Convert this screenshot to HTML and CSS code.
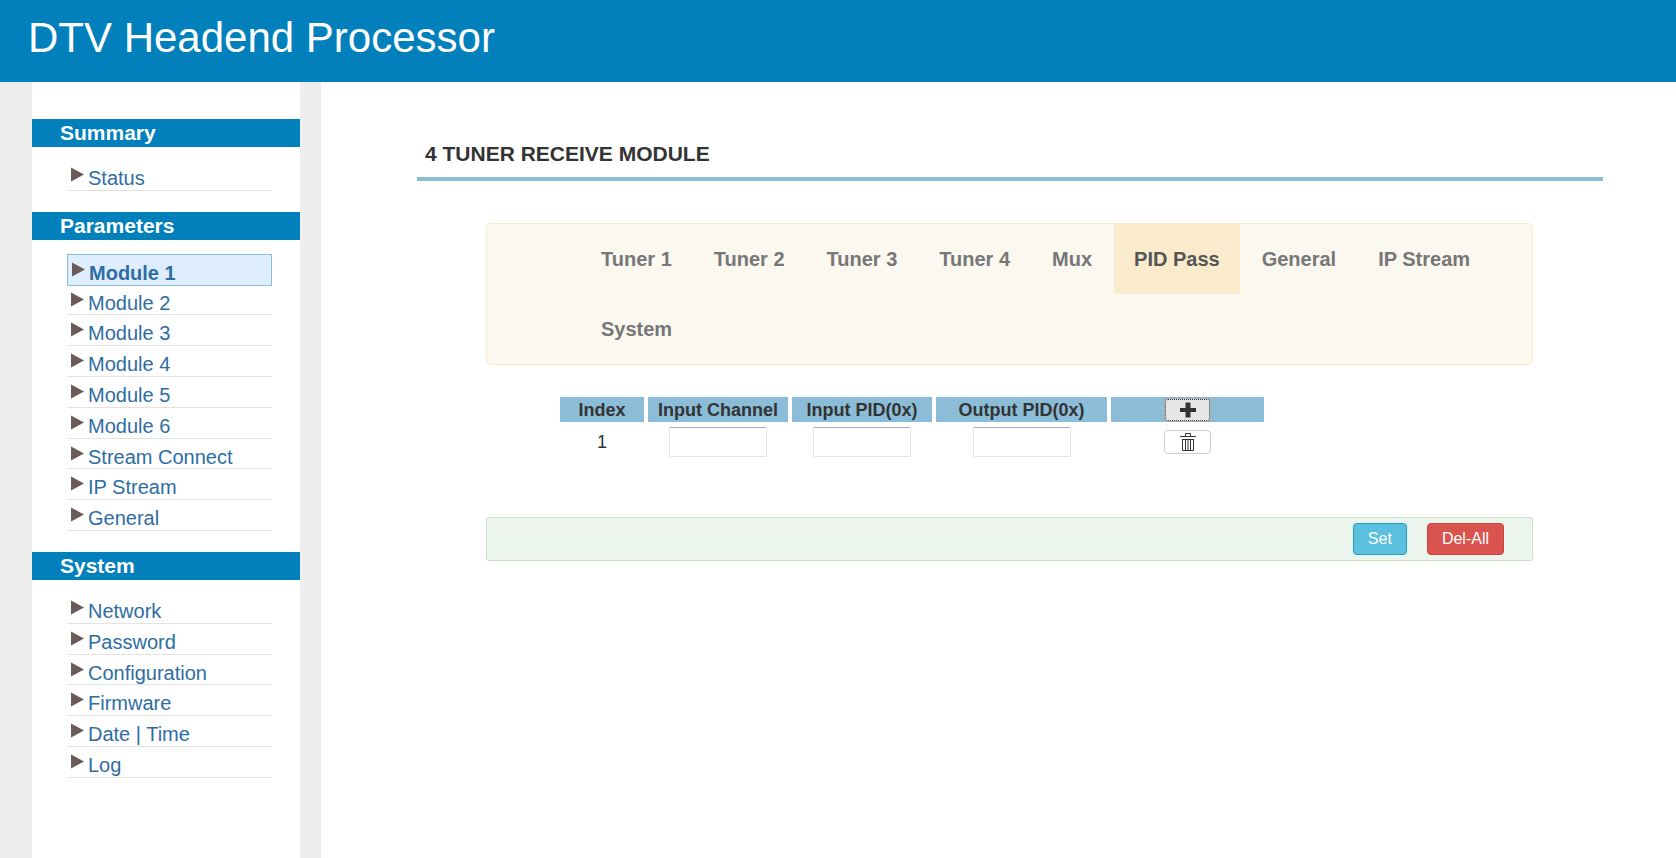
FILE: index.html
```html
<!DOCTYPE html>
<html lang="en">
<head>
    <meta charset="UTF-8">
    <title>DTV Headend Processor</title>
    <link rel="stylesheet" href="styles.css">
</head>
<body>
<svg class="sprite" aria-hidden="true">
    <symbol id="tri" viewBox="0 0 13 15"><path d="M0 0.5L13 7.5L0 14.5z" fill="#6b5a5a"/></symbol>
</svg>
<div class="header">
    <h1>DTV Headend Processor</h1>
</div>
<div class="wrap">
    <div class="side">
        <h2>Summary</h2>
        <ul>
            <li><a href="#"><svg><use href="#tri"/></svg>Status</a></li>
        </ul>
        <h2>Parameters</h2>
        <ul>
            <li class="current"><a href="#"><svg><use href="#tri"/></svg>Module 1</a></li>
            <li><a href="#"><svg><use href="#tri"/></svg>Module 2</a></li>
            <li><a href="#"><svg><use href="#tri"/></svg>Module 3</a></li>
            <li><a href="#"><svg><use href="#tri"/></svg>Module 4</a></li>
            <li><a href="#"><svg><use href="#tri"/></svg>Module 5</a></li>
            <li><a href="#"><svg><use href="#tri"/></svg>Module 6</a></li>
            <li><a href="#"><svg><use href="#tri"/></svg>Stream Connect</a></li>
            <li><a href="#"><svg><use href="#tri"/></svg>IP Stream</a></li>
            <li><a href="#"><svg><use href="#tri"/></svg>General</a></li>
        </ul>
        <h2>System</h2>
        <ul>
            <li><a href="#"><svg><use href="#tri"/></svg>Network</a></li>
            <li><a href="#"><svg><use href="#tri"/></svg>Password</a></li>
            <li><a href="#"><svg><use href="#tri"/></svg>Configuration</a></li>
            <li><a href="#"><svg><use href="#tri"/></svg>Firmware</a></li>
            <li><a href="#"><svg><use href="#tri"/></svg>Date | Time</a></li>
            <li><a href="#"><svg><use href="#tri"/></svg>Log</a></li>
        </ul>
    </div>
    <div class="main">
        <h3>4 TUNER RECEIVE MODULE</h3>
        <div class="content">
            <ul class="tabs">
                <li><a href="#">Tuner 1</a></li>
                <li><a href="#">Tuner 2</a></li>
                <li><a href="#">Tuner 3</a></li>
                <li><a href="#">Tuner 4</a></li>
                <li><a href="#">Mux</a></li>
                <li class="active"><a href="#">PID Pass</a></li>
                <li><a href="#">General</a></li>
                <li><a href="#">IP Stream</a></li>
                <li><a href="#">System</a></li>
            </ul>
            <table class="pid">
                <colgroup>
                    <col class="c-index"><col class="c-in"><col class="c-in"><col class="c-out"><col class="c-btn">
                </colgroup>
                <thead>
                <tr>
                    <th>Index</th>
                    <th id="th-ch">Input Channel</th>
                    <th id="th-in">Input PID(0x)</th>
                    <th id="th-out">Output PID(0x)</th>
                    <th>
                        <button type="button" class="icon add" aria-label="Add">
                            <svg width="16" height="16" viewBox="0 0 16 16"><path d="M5.5 0.5h5v5.5H16v4h-5.5v5.5h-5V10H0V6h5.5z" fill="#333"/></svg>
                        </button>
                    </th>
                </tr>
                </thead>
                <tbody>
                <tr>
                    <td>1</td>
                    <td><input type="text" aria-labelledby="th-ch"></td>
                    <td><input type="text" aria-labelledby="th-in"></td>
                    <td><input type="text" aria-labelledby="th-out"></td>
                    <td>
                        <button type="button" class="icon" aria-label="Delete">
                            <svg width="16" height="18" viewBox="0 0 16 18" fill="none" stroke="#333"><path d="M0 3.5h16M5.5 3V.5h5V3"/><path d="M2 6.5h12M2.5 6v11.5h11V6M5.5 7v10M8 7v10M10.5 7v10"/></svg>
                        </button>
                    </td>
                </tr>
                </tbody>
            </table>
            <div class="foot">
                <button type="button" class="btn set">Set</button>
                <button type="button" class="btn del">Del-All</button>
            </div>
        </div>
    </div>
</div>
</body>
</html>
```
FILE: styles.css
```css
*{box-sizing:border-box;}
body,h1,h2,h3,ul{margin:0;padding:0;}
body{
    display:flex;
    flex-direction:column;
    min-height:100vh;
    font:18px/24px "Liberation Sans", Arial, sans-serif;
    color:#333;
    background:#fff;
}
ul{list-style:none;}
a{text-decoration:none;}
button,input{font-family:inherit;}
button{cursor:pointer;}
.sprite{
    display:none;
}

.header{
    padding:14px 28px 20px;
    background:#0280bc;
}
.header h1{
    font-size:42px;
    line-height:48px;
    font-weight:normal;
    color:#fff;
}
.wrap{
    flex:1;
    display:flex;
}

/* left menu */
.side{
    width:321px;
    flex:none;
    padding-top:37px;
    border-left:32px solid #eee;
    border-right:21px solid #eee;
}
.side h2{
    padding-left:28px;
    font-size:21px;
    line-height:28px;
    color:#fff;
    background:#0280bc;
}
.side ul{
    margin:14px 28px 21px 35px;
}
.side li{
    padding-top:6px;
    margin-top:1px;
    border-bottom:1px solid #e2e2e2;
    font-size:20px;
    line-height:1.14;
}
.side li a{
    display:flex;
    padding-left:4px;
    color:#2e6da4;
}
.side li svg{
    flex:none;
    width:13px;
    height:15px;
    margin-right:4px;
}
.side .current{
    margin:0 0 -1px;
    padding-top:7px;
    border:1px solid #8bbcd8;
    background:#dfeeff;
    font-weight:bold;
}

.main{
    flex:1;
    padding:0 73px 40px 96px;
}
.main h3{
    padding:57px 8px 8px;
    border-bottom:4px solid #8bbcd8;
    font-size:21px;
    line-height:30px;
}
.content{
    margin:42px 70px 0 69px;
}
.tabs{
    display:flex;
    flex-wrap:wrap;
    gap:0 2px;
    padding:0 38px 0 94px;
    border:1px solid #f9eacc;
    border-radius:5px;
    background:#fbf8f0;
}
.tabs a{
    display:block;
    padding:20px;
    font-size:20px;
    line-height:30px;
    font-weight:bold;
    color:#777;
}
.tabs .active a{
    color:#555;
    background:#faebcd;
}

.pid{
    margin:28px 0 55px 70px;
    border-spacing:4px;
    text-align:center;
}
.pid th{
    height:25px;
    padding:0;
    background:#8bbcd8;
}
.pid td{
    padding:1px 0;
}
.c-index{width:84px;}
.c-in{width:140px;}
.c-out{width:171px;}
.c-btn{width:153px;}
.pid input{
    display:block;
    width:98px;
    height:30px;
    margin:0 auto;
    padding:0 6px;
    border:1px solid #e2e4ec;
    border-top-color:#abadb3;
    border-radius:2px;
    font-size:18px;
}
.icon{
    display:flex;
    align-items:center;
    justify-content:center;
    width:47px;
    height:24px;
    margin:0 auto;
    padding:0;
    border:1px solid #ccc;
    border-radius:4px;
    background:#fff;
}
.add{
    border-color:#adadad;
    background:#e6e6e6;
    outline:1px dotted #333;
    outline-offset:-2px;
}

.foot{
    display:flex;
    justify-content:flex-end;
    gap:20px;
    padding:5px 28px;
    border:1px solid #cfe0c8;
    border-radius:3px;
    background:#ebf4ed;
}
.btn{
    padding:0 14px;
    border:1px solid #1f9fca;
    border-radius:4px;
    font-size:16px;
    line-height:30px;
    color:#fff;
    background:#5bc0de;
}
.del{
    border-color:#d43f3a;
    background:#d9534f;
}
```
